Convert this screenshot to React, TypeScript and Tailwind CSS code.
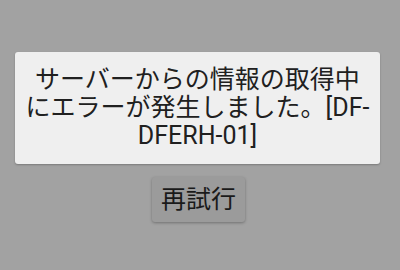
export default function App() {
  return (
    <div
      className="w-[400px] h-[270px] bg-[#a2a2a2] flex flex-col items-center pt-[52px]"
      style={{ fontFamily: '"Roboto", "Noto Sans CJK JP", sans-serif' }}
    >
      <div className="w-[365px] h-[112px] ml-[-5px] bg-[#efefef] rounded-[3px] shadow-[0_1px_2px_rgba(0,0,0,0.25)] flex items-center justify-center px-[8px]">
        <p className="text-[25px] leading-[28px] text-[#202020] text-center">
          サーバーからの情報の取得中にエラーが発生しました。[DF-DFERH-01]
        </p>
      </div>
      <button className="mt-[13px] ml-[-3px] w-[93px] h-[45px] bg-[#9b9b9b] rounded-[3px] shadow-[0_1px_3px_rgba(0,0,0,0.3)] text-[25px] text-[#1a1a1a] flex items-center justify-center">
        再試行
      </button>
    </div>
  );
}
